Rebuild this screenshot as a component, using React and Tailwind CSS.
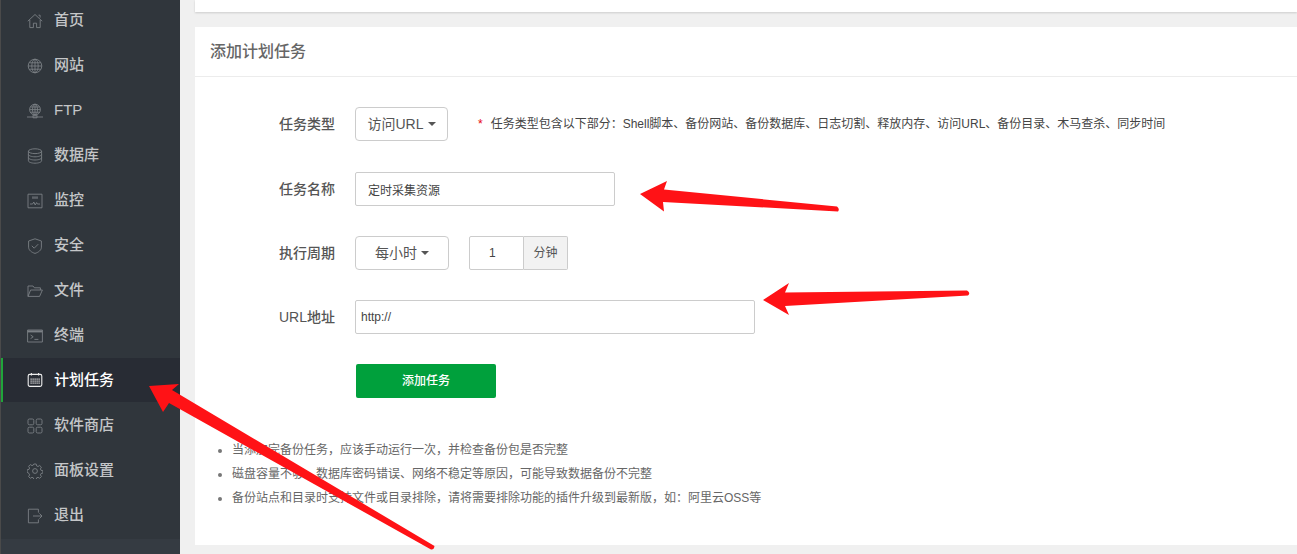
import React from 'react';

const Svg = ({ children }) => (
  <svg width="16" height="16" viewBox="0 0 16 16" fill="none" stroke="currentColor" strokeWidth="0.9" className="shrink-0">
    {children}
  </svg>
);

const calendarDots = [];
[6.5, 8.5, 10.5].forEach(y => {
  [3.5, 5.5, 7.5, 9.5, 11.5].forEach(x => {
    calendarDots.push(<rect key={x + '-' + y} x={x} y={y} width="1.2" height="1.2" fill="currentColor" stroke="none" />);
  });
});

const icons = {
  home: (
    <Svg>
      <path d="M0.8 8.200 8 1.500l7.200 6.700M2.800 7v7.600h3.600v-4.400h3.200v4.400h3.600V7M11.500 2.200h1.600v2.400" />
    </Svg>
  ),
  globe: (
    <Svg>
      <circle cx="8" cy="8" r="6.800" />
      <ellipse cx="8" cy="8" rx="3.200" ry="6.800" />
      <path d="M8 1.200v13.600M1.200 8h13.600M2.200 4.800h11.600M2.200 11.200h11.600" />
    </Svg>
  ),
  ftp: (
    <Svg>
      <circle cx="8" cy="6.600" r="5.400" />
      <ellipse cx="8" cy="6.600" rx="2.500" ry="5.400" />
      <path d="M8 1.200v10.800M2.600 6.600h10.800M3.400 4h9.200M3.400 9.200h9.200M0 14h16M6 12.200h4v2.600H6z" />
    </Svg>
  ),
  db: (
    <Svg>
      <ellipse cx="8" cy="3.200" rx="6.600" ry="2.400" />
      <path d="M1.400 3.200v9.600c0 1.300 3 2.400 6.600 2.400s6.600-1.100 6.600-2.400V3.200M1.400 6.400c0 1.300 3 2.400 6.600 2.400s6.600-1.100 6.600-2.400M1.400 9.600c0 1.300 3 2.400 6.600 2.400s6.600-1.100 6.600-2.400" />
    </Svg>
  ),
  monitor: (
    <Svg>
      <path d="M1 1.200h14v13.600H1zM3 11h2.600l1.200-2 1.400 3L9.600 9.600l.8 1.400H13" />
      <path d="M5 3.400h6v2.400H5z" fill="currentColor" stroke="none" opacity="0.6" />
    </Svg>
  ),
  shield: (
    <Svg>
      <path d="M8 .8 14.400 3v6.200c0 3-3 5.200-6.400 6.200-3.400-1-6.400-3.200-6.400-6.200V3zM4.800 7.800l2.400 2.400 4-4" />
    </Svg>
  ),
  folder: (
    <Svg>
      <path d="M1 13.400V3h5l1.400 1.800h6V7M1 13.400h11.600L15.400 7H3.600z" />
    </Svg>
  ),
  terminal: (
    <Svg>
      <path d="M.6 2h14.800v12H.6z" />
      <path d="M.6 3.400h14.800" strokeWidth="2" />
      <path d="M3.600 7l2.600 1.800-2.600 1.800M7.400 11.400h4" />
    </Svg>
  ),
  calendar: (
    <Svg>
      <rect x="1.200" y="2.400" width="13.600" height="12" rx="1.600" strokeWidth="1.100" />
      <path d="M4.400 1v2.600M11.600 1v2.600" strokeWidth="1.100" />
      {calendarDots}
    </Svg>
  ),
  apps: (
    <Svg>
      <rect x="1" y="1" width="5.800" height="5.800" rx="1.400" />
      <rect x="9.200" y="1" width="5.800" height="5.800" rx="1.400" />
      <rect x="1" y="9.200" width="5.800" height="5.800" rx="1.400" />
      <rect x="9.200" y="9.200" width="5.800" height="5.800" rx="1.400" />
    </Svg>
  ),
  gear: (
    <Svg>
      <circle cx="8" cy="8" r="2.400" />
      <path d="M6.800 1h2.400l.4 1.900 1.400.6 1.700-1 1.700 1.700-1 1.700.6 1.400 1.900.4v2.400l-1.900.4-.6 1.400 1 1.700-1.700 1.700-1.700-1-1.400.6-.4 1.900H6.800l-.4-1.900-1.400-.6-1.700 1-1.700-1.700 1-1.700-.6-1.400L.1 9.200V6.800l1.900-.4.600-1.400-1-1.700 1.700-1.700 1.700 1 1.400-.6z" />
    </Svg>
  ),
  exit: (
    <Svg>
      <path d="M11.400 4.600V1.200H1.400v13.600h10v-3.400M6 8h9M12.400 5.400 15 8l-2.600 2.600" />
    </Svg>
  ),
};

const menu = [
  ['home', '首页'],
  ['globe', '网站'],
  ['ftp', 'FTP'],
  ['db', '数据库'],
  ['monitor', '监控'],
  ['shield', '安全'],
  ['folder', '文件'],
  ['terminal', '终端'],
  ['calendar', '计划任务', true],
  ['apps', '软件商店'],
  ['gear', '面板设置'],
  ['exit', '退出'],
];

const notes = [
  '当添加完备份任务\uFF0C应该手动运行一次\uFF0C并检查备份包是否完整',
  '磁盘容量不够、数据库密码错误、网络不稳定等原因\uFF0C可能导致数据备份不完整',
  '备份站点和目录时支持文件或目录排除\uFF0C请将需要排除功能的插件升级到最新版\uFF0C如\uFF1A阿里云OSS等',
];

const hint = '任务类型包含以下部分\uFF1AShell脚本、备份网站、备份数据库、日志切割、释放内存、访问URL、备份目录、木马查杀、同步时间';

const Caret = () => (
  <span className="ml-[4px] inline-block w-0 h-0 border-x-[4px] border-x-transparent border-t-[4px] border-t-[#555]" />
);

const Label = ({ children }) => (
  <label className="w-[160px] text-right pr-[20px] text-[14px] font-medium text-[#555] shrink-0">{children}</label>
);

export default function App() {
  return (
    <div
      className="relative flex h-[554px] overflow-hidden bg-[#f0f0f0]"
      style={{ fontFamily: '"Liberation Sans", "Noto Sans CJK SC", sans-serif' }}
    >
      <aside className="w-[180px] shrink-0 h-full bg-[#353b42] border-l border-[#4a4a4a]">
        <nav className="-mt-[2px] bg-[#30363c] pb-px">
          {menu.map(([icon, text, active]) => (
            <div
              key={text}
              className={
                active
                  ? 'flex items-center h-[44px] mb-px pl-[24px] gap-[11px] bg-[#282c34] border-l-2 border-[#20a53a] text-white'
                  : 'flex items-center h-[45px] pl-[26px] gap-[11px] text-[#c4c6c8]'
              }
            >
              <span className={active ? 'text-[#eeeeee]' : 'text-[#7b8085]'}>{icons[icon]}</span>
              <span className="text-[15px] font-medium">{text}</span>
            </div>
          ))}
        </nav>
      </aside>

      <main className="flex-1 min-w-0 pl-[15px]">
        <div className="h-[12px] bg-white shadow-[0_1px_2px_rgba(0,0,0,0.15)]" />
        <section className="mt-[15px] h-[518px] bg-white">
          <h2 className="h-[50px] pl-[15px] flex items-center text-[16px] font-medium text-[#666] border-b border-[#ececec]">
            添加计划任务
          </h2>

          <div className="pt-[30px]">
            <div className="flex items-center h-[34px]">
              <Label>任务类型</Label>
              <button className="w-[93px] h-[34px] flex items-center justify-center rounded-[4px] border border-[#ccc] bg-white text-[14px] text-[#555]">
                访问URL
                <Caret />
              </button>
              <span className="ml-[30px] text-[12px] text-red-600">*</span>
              <span className="ml-[8px] text-[12px] text-[#444]">{hint}</span>
            </div>

            <div className="flex items-center h-[34px] mt-[31px]">
              <Label>任务名称</Label>
              <input
                readOnly
                value="定时采集资源"
                className="w-[260px] h-[34px] px-[12px] rounded-[2px] border border-[#ccc] text-[12px] text-[#444] outline-none"
              />
            </div>

            <div className="flex items-center h-[34px] mt-[30px]">
              <Label>执行周期</Label>
              <button className="w-[94px] h-[34px] flex items-center justify-center rounded-[4px] border border-[#ccc] bg-white text-[14px] text-[#555]">
                每小时
                <Caret />
              </button>
              <div className="ml-[20px] flex">
                <input
                  readOnly
                  value="1"
                  className="w-[55px] h-[34px] pl-[19px] border border-[#ccc] rounded-l-[2px] text-[12px] text-[#444] outline-none"
                />
                <span className="w-[44px] h-[34px] flex items-center justify-center border border-l-0 border-[#ccc] rounded-r-[2px] bg-[#f2f2f2] text-[12px] text-[#555]">
                  分钟
                </span>
              </div>
            </div>

            <div className="flex items-center h-[34px] mt-[30px]">
              <Label>URL地址</Label>
              <input
                readOnly
                value="http://"
                className="w-[400px] h-[34px] px-[5px] rounded-[2px] border border-[#ccc] text-[12px] text-[#444] outline-none"
              />
            </div>

            <div className="pl-[161px] mt-[30px]">
              <button className="w-[140px] h-[34px] rounded-[2px] bg-[#00a03c] text-white text-[12px] font-medium">
                添加任务
              </button>
            </div>

            <ul className="mt-[40px] pl-[37px] list-disc text-[12px] leading-[24px] text-[#666] marker:text-[#777]">
              {notes.map(n => (
                <li key={n}>{n}</li>
              ))}
            </ul>
          </div>
        </section>
      </main>

      {/* red annotation arrows drawn on top of the screenshot */}
      <svg width="1297" height="554" className="absolute left-0 top-0 pointer-events-none" fill="#ff1216">
        <path d="M640 194 667 181 664 189.500 837 206.500Q840 209 838 211.500L663 202 664 211.500Z" />
        <path d="M763 300 789 283 785 292.500 967 290.500Q971 293 968 295.500L785 306 789 315Z" />
        <path d="M149 386 179 384 172 390 434.500 546Q434 550 431 549.500L169 403 163 412Z" />
      </svg>
    </div>
  );
}
